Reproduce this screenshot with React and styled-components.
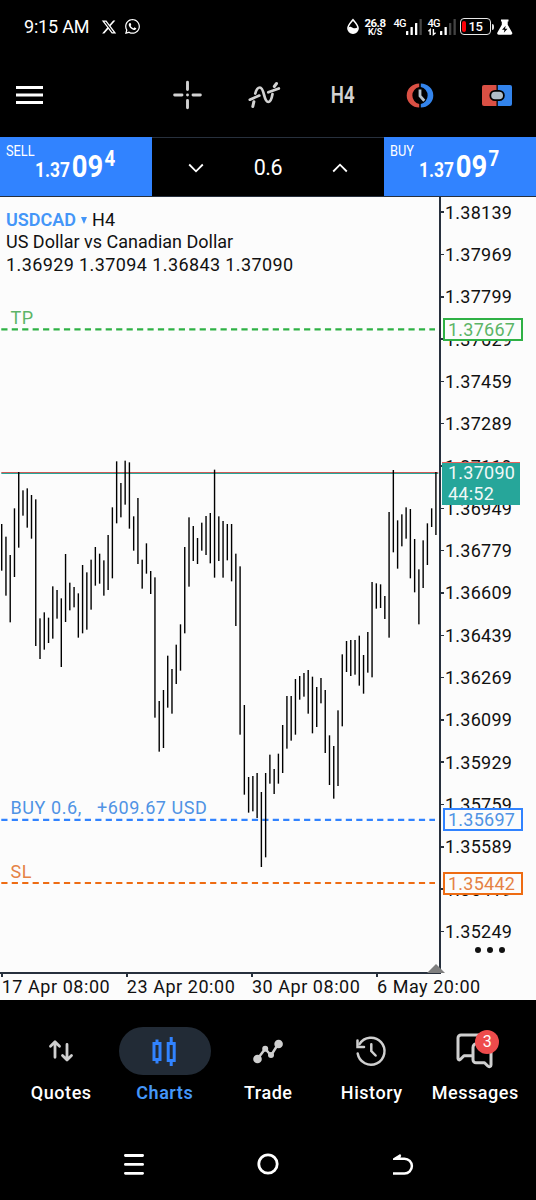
import styled, { createGlobalStyle } from "styled-components";
import { FaWhatsapp, FaXTwitter } from "react-icons/fa6";

const GlobalStyle = createGlobalStyle`
  * {
    box-sizing: border-box;
  }
  body {
    margin: 0;
    background-color: #000;
    font-family: Roboto, "Liberation Sans", sans-serif;
  }
`;

const Container = styled.div`
  width: 536px;
  height: 1200px;
  display: flex;
  flex-direction: column;
  background-color: #000;
  color: #fff;
  overflow: hidden;
`;

const Svg = styled.svg`
  display: block;
  flex-shrink: 0;
  overflow: visible;
`;

/* status bar */

const StatusBar = styled.div`
  height: 54px;
  padding: 0 23.5px 1px 24px;
  display: flex;
  align-items: center;
  justify-content: space-between;
`;

const StatusLeft = styled.div`
  display: flex;
  align-items: center;
`;

const Clock = styled.span`
  width: 77px;
  font-size: 18px;
  letter-spacing: -0.2px;
  white-space: nowrap;
`;

const AppIcons = styled.div`
  display: flex;
  align-items: center;
  gap: 7px;
`;

const StatusRight = styled.div`
  display: flex;
  align-items: center;
`;

const Speed = styled.div`
  width: 22px;
  margin: 0 7.5px 0 5.5px;
  display: flex;
  flex-direction: column;
  align-items: center;
  font-size: 11.5px;
  font-weight: 700;
  line-height: 10px;
  letter-spacing: -0.5px;
`;

const SpeedUnit = styled.span`
  font-size: 9px;
  line-height: 8px;
  letter-spacing: -0.2px;
`;

const Signal = styled.div`
  width: 28px;
  height: 16px;
  margin-right: ${(props) => props.$gap}px;
  display: flex;
  justify-content: space-between;
`;

const SignalType = styled.div`
  font-size: 11px;
  font-weight: 500;
  line-height: 10px;
  letter-spacing: -0.7px;
`;

const Battery = styled.div`
  width: 31px;
  height: 17px;
  padding: 1px;
  border: 1.5px solid #e8e8e8;
  border-radius: 4px;
  display: flex;
  align-items: center;
  gap: 2.5px;
  font-size: 13px;
  font-weight: 500;
  letter-spacing: -0.5px;
`;

const BatteryLevel = styled.div`
  width: 4px;
  height: 11px;
  border-radius: 2px;
  background-color: #fb0007;
`;

const BatteryNub = styled.div`
  width: 2px;
  height: 6px;
  margin: 0 3px 0 1px;
  border-radius: 0 2px 2px 0;
  background-color: #ddd;
`;

/* toolbar */

const Toolbar = styled.div`
  height: 83px;
  padding: 0 0 1px 16px;
  display: flex;
  align-items: center;
  justify-content: space-between;
`;

const Tools = styled.div`
  display: flex;
`;

const Tool = styled.div`
  width: 77.5px;
  display: flex;
  align-items: center;
  justify-content: center;
  color: #d2d2d2;
`;

const Timeframe = styled.span`
  font-size: 23px;
  font-weight: 600;
  transform: scaleX(0.81);
`;

/* one click trading */

const TradePanel = styled.div`
  height: 60px;
  display: flex;
  border-bottom: 1px solid #27303d;
`;

const TradeButton = styled.div`
  width: 152px;
  padding-left: 6px;
  display: flex;
  background-color: #3183ff;
`;

const Side = styled.span`
  width: 29px;
  padding-top: 6px;
  font-size: 15px;
  line-height: 17px;
  white-space: nowrap;
  transform: scaleX(0.85);
  transform-origin: left;
`;

const Quote = styled.div`
  height: 59px;
  display: flex;
  align-items: baseline;
  font-size: 20px;
  font-weight: 700;
  line-height: 59px;
  white-space: nowrap;
  transform: scaleX(0.87);
  transform-origin: left;
`;

const Pips = styled.span`
  margin: 0 1.5px 0 2px;
  font-size: 31.5px;
`;

const Pipette = styled.span`
  font-size: 21.5px;
  transform: translateY(-11.5px);
`;

const Volume = styled.div`
  flex: 1;
  border-top: 1px solid #27303d;
  padding: 1px 36px 0;
  display: flex;
  align-items: center;
  justify-content: space-between;
  font-size: 21.5px;
  letter-spacing: -0.4px;
`;

/* chart */

const Chart = styled.div`
  position: relative;
  height: 803px;
  display: flex;
  flex-direction: column;
  background-color: #fcfcfc;
  color: #111;
  font-size: 18px;
`;

const ChartBody = styled.div`
  height: 775px;
  display: flex;
`;

const Plot = styled.div`
  position: relative;
  width: 439px;
`;

const Legend = styled.div`
  position: absolute;
  top: 12px;
  left: 6px;
  line-height: 22.5px;
  white-space: nowrap;
`;

const LegendTitle = styled.div`
  height: 22px;
  display: flex;
  align-items: center;
`;

const Symbol = styled.span`
  margin-right: 5px;
  font-weight: 600;
  color: #4496f8;
`;

const Period = styled.span`
  margin-left: 5px;
`;

const LegendLine = styled.div`
  letter-spacing: ${(props) => props.$spacing}px;
`;

const LineText = styled.text`
  font-size: 18px;
  letter-spacing: 0.58px;
  white-space: pre;
`;

const PriceAxis = styled.div`
  position: relative;
  flex: 1;
  border-left: 2px solid #27303d;
`;

const PriceScale = styled.div`
  margin-top: -6px;
`;

const PriceLabel = styled.div`
  height: 42.32px;
  display: flex;
  align-items: center;
  letter-spacing: 0.25px;

  &::before {
    content: "";
    width: 3px;
    height: 1.5px;
    margin-right: 1px;
    background-color: #27303d;
  }
`;

const LevelTag = styled.div`
  position: absolute;
  top: ${(props) => props.$y - 11.5}px;
  left: 2px;
  width: 80px;
  height: 23px;
  padding-left: 3px;
  border: 2px solid ${(props) => props.$border};
  background-color: #fcfcfc;
  color: ${(props) => props.$color};
  line-height: 20px;
  letter-spacing: 0.25px;
`;

const BidTag = styled.div`
  position: absolute;
  top: 265px;
  left: 1px;
  width: 78px;
  height: 43px;
  padding-left: 6px;
  border-top: 1px solid #e8605a;
  background-color: #26a69a;
  color: #f0f8f7;
  line-height: 21px;
  letter-spacing: 0.25px;
`;

const BidPrice = styled.div`
  margin-top: -1px;
`;

const More = styled.div`
  position: absolute;
  top: 749.5px;
  left: 34px;
  display: flex;
  gap: 6px;
`;

const Dot = styled.div`
  width: 6px;
  height: 6px;
  border-radius: 50%;
  background-color: #111;
`;

const ShiftMarker = styled.div`
  position: absolute;
  left: 427px;
  top: 767px;
  border: 9.5px solid transparent;
  border-top: none;
  border-bottom: 9.5px solid #7f7f7f;
`;

const TimeAxis = styled.div`
  flex: 1;
  display: flex;
  padding-left: 1px;
`;

const TimeLine = styled.div`
  width: 441px;
  height: 2px;
  background-color: #27303d;
`;

const TimeLabel = styled.div`
  width: 125.1px;
  padding: 3px 0 0 0.7px;
  letter-spacing: 0.55px;
  line-height: 19px;
  white-space: nowrap;

  &::before {
    content: "";
    display: block;
    width: 1.5px;
    height: 3px;
    margin: -3px 0 0 -0.7px;
    background-color: #27303d;
  }
`;

/* bottom navigation */

const BottomNav = styled.div`
  height: 120px;
  padding: 27px 9px 0 9.5px;
  display: flex;
`;

const NavItem = styled.div`
  width: 103.5px;
  display: flex;
  flex-direction: column;
  align-items: center;
  gap: 7px;
  color: ${(props) => (props.$active ? "#4496f8" : "#fff")};
  font-size: 18px;
  font-weight: ${(props) => (props.$active ? 600 : 500)};
  letter-spacing: 0.55px;
`;

const NavIcon = styled.div`
  position: relative;
  width: 92px;
  height: 48px;
  border-radius: 24px;
  display: flex;
  align-items: center;
  justify-content: center;
  color: ${(props) => (props.$active ? "#3183ff" : "#cfcfcf")};
  background-color: ${(props) => (props.$active ? "#222b36" : "transparent")};
`;

const Badge = styled.span`
  position: absolute;
  top: 3px;
  left: 46px;
  width: 24px;
  height: 24px;
  border-radius: 50%;
  background-color: #ee4b4c;
  color: #fff;
  font-size: 16px;
  font-weight: 400;
  letter-spacing: 0;
  line-height: 24px;
  text-align: center;
`;

const SystemNav = styled.div`
  height: 80px;
  padding: 8px 123.5px 0;
  display: flex;
  align-items: center;
  justify-content: space-between;
`;

// high / low offsets of every bar, in thirds of a pixel below the top mark
const bars = [
  [222, 362], [260, 437], [315, 517], [175, 381], [66, 293], [121, 197],
  [115, 233], [135, 266], [148, 588], [505, 627], [487, 599], [503, 579],
  [409, 566], [420, 506], [445, 651], [312, 516], [398, 481], [411, 472],
  [430, 563], [345, 550], [367, 539], [329, 479], [291, 407], [311, 401],
  [331, 437], [255, 420], [172, 385], [34, 220], [99, 202], [32, 164],
  [37, 236], [199, 302], [144, 342], [329, 416], [280, 371], [363, 432],
  [382, 803], [753, 905], [720, 894], [617, 773], [657, 791], [584, 702],
  [523, 662], [291, 550], [202, 410], [228, 333], [264, 342], [218, 302],
  [198, 315], [189, 340], [59, 383], [199, 333], [213, 383], [222, 331],
  [222, 394], [311, 528], [349, 854], [765, 1034], [981, 1088], [978, 1084],
  [969, 1104], [1026, 1251], [969, 1222], [914, 1001], [957, 1032], [911, 1001],
  [825, 969], [738, 896], [738, 872], [687, 854], [678, 749], [669, 740],
  [660, 791], [680, 850], [711, 831], [684, 760], [720, 909], [856, 1005],
  [888, 1046], [781, 1008], [613, 829], [573, 666], [570, 678], [570, 674],
  [557, 707], [615, 731], [546, 668], [396, 682], [400, 476], [403, 474],
  [438, 507], [186, 563], [60, 307], [211, 356], [193, 289], [172, 266],
  [177, 385], [267, 427], [358, 523], [271, 414], [220, 345], [175, 231],
  [66, 255],
];

const barX = (i) => 1.7 + i * 4.257;
const barY = (v) => 253 + v / 3;

const levels = [
  { label: "TP", price: "1.37667", y: 132.4, line: "#2fb145", text: "#5cb567" },
  { label: "BUY 0.6,   +609.67 USD", price: "1.35697", y: 622.8, line: "#3183ff", text: "#5093e4" },
  { label: "SL", price: "1.35442", y: 686, line: "#ee6c13", text: "#e58245" },
];

const prices = [
  "1.38139", "1.37969", "1.37799", "1.37629", "1.37459", "1.37289",
  "1.37119", "1.36949", "1.36779", "1.36609", "1.36439", "1.36269",
  "1.36099", "1.35929", "1.35759", "1.35589", "1.35419", "1.35249",
];

const times = ["17 Apr 08:00", "23 Apr 20:00", "30 Apr 08:00", "6 May 20:00"];

const SignalBars = ({ level }) => (
  <Svg width="16" height="16" viewBox="0 0 16 16">
    {[4, 8, 12, 16].map((h, i) => (
      <rect key={h} x={i * 4.5} y={16 - h} width="2.3" height={h} rx="0.5" fill={i < level ? "#fff" : "#444"} />
    ))}
  </Svg>
);

const Chevron = ({ up }) => (
  <Svg width="16" height="10" viewBox="0 0 16 10" fill="none" stroke="#fff" strokeWidth="1.8">
    <path d={up ? "M1.2 8.5 8 1.7l6.8 6.8" : "M1.2 1.5 8 8.3l6.8-6.8"} />
  </Svg>
);

const App = () => {
  return (
    <Container>
      <GlobalStyle />
      <StatusBar>
        <StatusLeft>
          <Clock>9:15 AM</Clock>
          <AppIcons>
            <FaXTwitter size={16} />
            <FaWhatsapp size={17} />
          </AppIcons>
        </StatusLeft>
        <StatusRight>
          <Svg width="12" height="15" viewBox="0 0 12 15">
            <path d="M6 .8C4.3 3 .9 6.1.9 9.2a5.1 5.1 0 0 0 10.2 0C11.1 6.1 7.7 3 6 .8z" fill="none" stroke="#fff" strokeWidth="1.5" />
            <path d="M1.2 8.6c1.8-1.6 3.2-.4 4.8.3 1.7.7 3.3.6 4.8-.9v2.2c-.4 2.5-2.5 4.1-4.8 4.1s-4.6-1.8-4.8-4.2z" fill="#fff" />
          </Svg>
          <Speed>
            26.8
            <SpeedUnit>K/S</SpeedUnit>
          </Speed>
          <Signal $gap={6}>
            <SignalType>4G</SignalType>
            <SignalBars level={3} />
          </Signal>
          <Signal $gap={4.5}>
            <SignalType>
              4G
              <Svg width="8" height="6" viewBox="0 0 8 6" fill="none" stroke="#fff" strokeWidth="1.4">
                <path d="M.4 2.2 2.2.5V6M7.6 3.8 5.4 5.5V0" />
              </Svg>
            </SignalType>
            <SignalBars level={2} />
          </Signal>
          <Battery>
            <BatteryLevel />
            15
          </Battery>
          <BatteryNub />
          <Svg width="15.5" height="16" viewBox="0 0 15.5 16">
            <path d="M4 .5h7.5v2h-.8v3.3l4.4 7.6c.6 1.2 0 2.3-1.3 2.3H1.7c-1.3 0-1.9-1.1-1.3-2.3l4.4-7.6V2.500H4z" fill="#fff" />
            <path d="M8.7 6.8 5 10.7h2.5l-.7 3 3.7-4H8z" fill="#000" />
          </Svg>
        </StatusRight>
      </StatusBar>

      <Toolbar>
        <Svg width="27" height="18" viewBox="0 0 27 18" fill="#fff">
          <path d="M0 0h27v3H0zM0 7.5h27v3H0zM0 15h27v3H0z" />
        </Svg>
        <Tools>
          <Tool>
            <Svg width="29" height="30" viewBox="0 0 30 30" stroke="currentColor" strokeWidth="3" strokeLinecap="round">
              <path d="M15 1.7v7.6M15 20.7v7.6M1.7 15h7.6M20.7 15h7.6" />
              <circle cx="15" cy="15" r="1.5" fill="currentColor" stroke="none" />
            </Svg>
          </Tool>
          <Tool>
            <Svg width="34" height="28" viewBox="0 0 34 28" fill="none" stroke="currentColor" strokeWidth="2.7" strokeLinecap="round">
              <path d="M1.8 18.7 11.3 14.6M20.3 11.3 30.8 7.5" />
              <path d="M7.3 12.5C8.3 8.5 9.8 6.5 11.9 6.5c4.6 0 3.6 14.5 8.3 14.5 2.3 0 3.300-2 4.300-8" />
              <path d="M5.9 20.7 4.8 25.5M26.3 5.5l2.2-3" strokeWidth="3" />
            </Svg>
          </Tool>
          <Tool>
            <Timeframe>H4</Timeframe>
          </Tool>
          <Tool>
            <Svg width="30" height="25" viewBox="0 0 30 25">
              <path d="M14.2.4A12.5 12.1 0 0 0 14.2 24.6V21A8.7 8.7 0 0 1 14.2 4z" fill="#da5044" />
              <path d="M15.8.4A12.5 12.1 0 0 1 15.8 24.6V21A8.7 8.7 0 0 0 15.8 4z" fill="#3384ec" />
              <path d="M15 6.5V13l4.3 4.7" fill="none" stroke="#b7c2cb" strokeWidth="2.8" />
            </Svg>
          </Tool>
          <Tool>
            <Svg width="30" height="21" viewBox="0 0 30 21">
              <path d="M2 0h12.5v21H2a2 2 0 0 1-2-2V2a2 2 0 0 1 2-2z" fill="#da5044" />
              <path d="M15.8 0H28a2 2 0 0 1 2 2v17a2 2 0 0 1-2 2H15.8z" fill="#3384ec" />
              <rect x="8.3" y="5.8" width="13.6" height="9.4" rx="4.7" fill="#b0bdc7" stroke="#000" strokeWidth="1.8" />
            </Svg>
          </Tool>
        </Tools>
      </Toolbar>

      <TradePanel>
        <TradeButton>
          <Side>SELL</Side>
          <Quote>
            1.37<Pips>09</Pips><Pipette>4</Pipette>
          </Quote>
        </TradeButton>
        <Volume>
          <Chevron />
          0.6
          <Chevron up />
        </Volume>
        <TradeButton>
          <Side>BUY</Side>
          <Quote>
            1.37<Pips>09</Pips><Pipette>7</Pipette>
          </Quote>
        </TradeButton>
      </TradePanel>

      <Chart>
        <ChartBody>
          <Plot>
            <Svg width="439" height="775" viewBox="0 0 439 775">
              <rect x="1.3" y="275" width="437" height="1" fill="#cf5a56" />
              <rect x="1.3" y="276" width="437" height="1" fill="#26a69a" />
              {levels.map((level) => (
                <g key={level.label}>
                  <line x1="1.3" x2="435" y1={level.y} y2={level.y} stroke={level.line} strokeWidth="2.2" strokeDasharray="6.2 4.24" />
                  <LineText x="10.5" y={level.y - 5.5} fill={level.text}>{level.label}</LineText>
                </g>
              ))}
              {bars.map(([high, low], i) => (
                <rect key={i} x={barX(i) - 0.7} y={barY(high)} width="1.4" height={(low - high) / 3} fill="#000" />
              ))}
            </Svg>
            <Legend>
              <LegendTitle>
                <Symbol>USDCAD</Symbol>
                <Svg width="6" height="7" viewBox="0 0 6 7">
                  <path d="M0 0h6L3 7z" fill="#4496f8" />
                </Svg>
                <Period>H4</Period>
              </LegendTitle>
              <LegendLine $spacing={0}>US Dollar vs Canadian Dollar</LegendLine>
              <LegendLine $spacing={0.4}>1.36929 1.37094 1.36843 1.37090</LegendLine>
            </Legend>
          </Plot>
          <PriceAxis>
            <PriceScale>
              {prices.map((price) => (
                <PriceLabel key={price}>{price}</PriceLabel>
              ))}
            </PriceScale>
            {levels.map((level) => (
              <LevelTag key={level.price} $y={level.y} $border={level.line} $color={level.text}>
                {level.price}
              </LevelTag>
            ))}
            <BidTag>
              <BidPrice>1.37090</BidPrice>
              <div>44:52</div>
            </BidTag>
            <More>
              <Dot />
              <Dot />
              <Dot />
            </More>
          </PriceAxis>
        </ChartBody>
        <TimeLine />
        <TimeAxis>
          {times.map((time) => (
            <TimeLabel key={time}>{time}</TimeLabel>
          ))}
        </TimeAxis>
        <ShiftMarker />
      </Chart>

      <BottomNav>
        <NavItem>
          <NavIcon>
            <Svg width="24" height="22" viewBox="0 0 24 22" fill="none" stroke="currentColor" strokeWidth="2.8" strokeLinecap="round" strokeLinejoin="round">
              <path d="M6 17.3V2M1.5 6.2 6 1.8l4.5 4.4M18 4.5v15.300M13.500 15.600 18 20l4.500-4.400" />
            </Svg>
          </NavIcon>
          Quotes
        </NavItem>
        <NavItem $active>
          <NavIcon $active>
            <Svg width="26" height="30" viewBox="0 0 26 30" fill="none" stroke="currentColor" strokeWidth="3">
              <path d="M2 7.5h6v16H2zM5 3.5v4M5 23.5v4M16.2 7.5h6v17h-6zM19.2 1v6M19.2 24.5V30" />
            </Svg>
          </NavIcon>
          Charts
        </NavItem>
        <NavItem>
          <NavIcon>
            <Svg width="30" height="25" viewBox="0 0 30 25" fill="currentColor">
              <path d="M4.5 20 12.2 9.7 18 16.5l7.5-12" fill="none" stroke="currentColor" strokeWidth="2.5" />
              <circle cx="4.5" cy="20" r="4.3" />
              <circle cx="12.2" cy="9.7" r="3" />
              <circle cx="18" cy="16" r="3" />
              <circle cx="25.6" cy="5" r="4.3" />
            </Svg>
          </NavIcon>
          Trade
        </NavItem>
        <NavItem>
          <NavIcon>
            <Svg width="31" height="30" viewBox="0 0 31 30" fill="none" stroke="currentColor" strokeWidth="2.5" strokeLinecap="round">
              <path d="M1.7 17.5A13.5 13.5 0 1 0 3.5 8.2" />
              <path d="M1.5 4.5V11h6.500M15.300 8.300V15l4.300 4.500" />
            </Svg>
          </NavIcon>
          History
        </NavItem>
        <NavItem>
          <NavIcon>
            <Svg width="36" height="34" viewBox="0 0 36 34" fill="none" stroke="currentColor" strokeWidth="3" strokeLinejoin="round">
              <path d="M31.5 8V4a3 3 0 0 0-3-3H4a3 3 0 0 0-3 3v20.500c0 1.500 1.600 1.800 2.500.8L7 21.800h8" />
              <path d="M20 9.500h11a3 3 0 0 1 3 3v18.500c0 1.700-2 2.200-3.200 1l-3.300-3.300H19a3 3 0 0 1-3-3V13.500a4 4 0 0 1 4-4z" />
            </Svg>
            <Badge>3</Badge>
          </NavIcon>
          Messages
        </NavItem>
      </BottomNav>

      <SystemNav>
        <Svg width="20" height="21" viewBox="0 0 20 21" stroke="#fff" strokeWidth="2.8" strokeLinecap="round">
          <path d="M1.4 1.5h17.2M1.4 10.4h17.2M1.4 19.3h17.2" />
        </Svg>
        <Svg width="22" height="22" viewBox="0 0 22 22" fill="none" stroke="#fff" strokeWidth="2.8">
          <circle cx="11" cy="11" r="9.2" />
        </Svg>
        <Svg width="20" height="21" viewBox="0 0 20 21" fill="none" stroke="#fff" strokeWidth="2.5">
          <path d="M0 19.5h11.5a7.3 7.3 0 0 0 0-14.8H2" />
          <path d="M0 4.5 7.2 0 8.2 1.7 6.5 5.9H0z" fill="#fff" stroke="none" />
        </Svg>
      </SystemNav>
    </Container>
  );
};

export default App;
